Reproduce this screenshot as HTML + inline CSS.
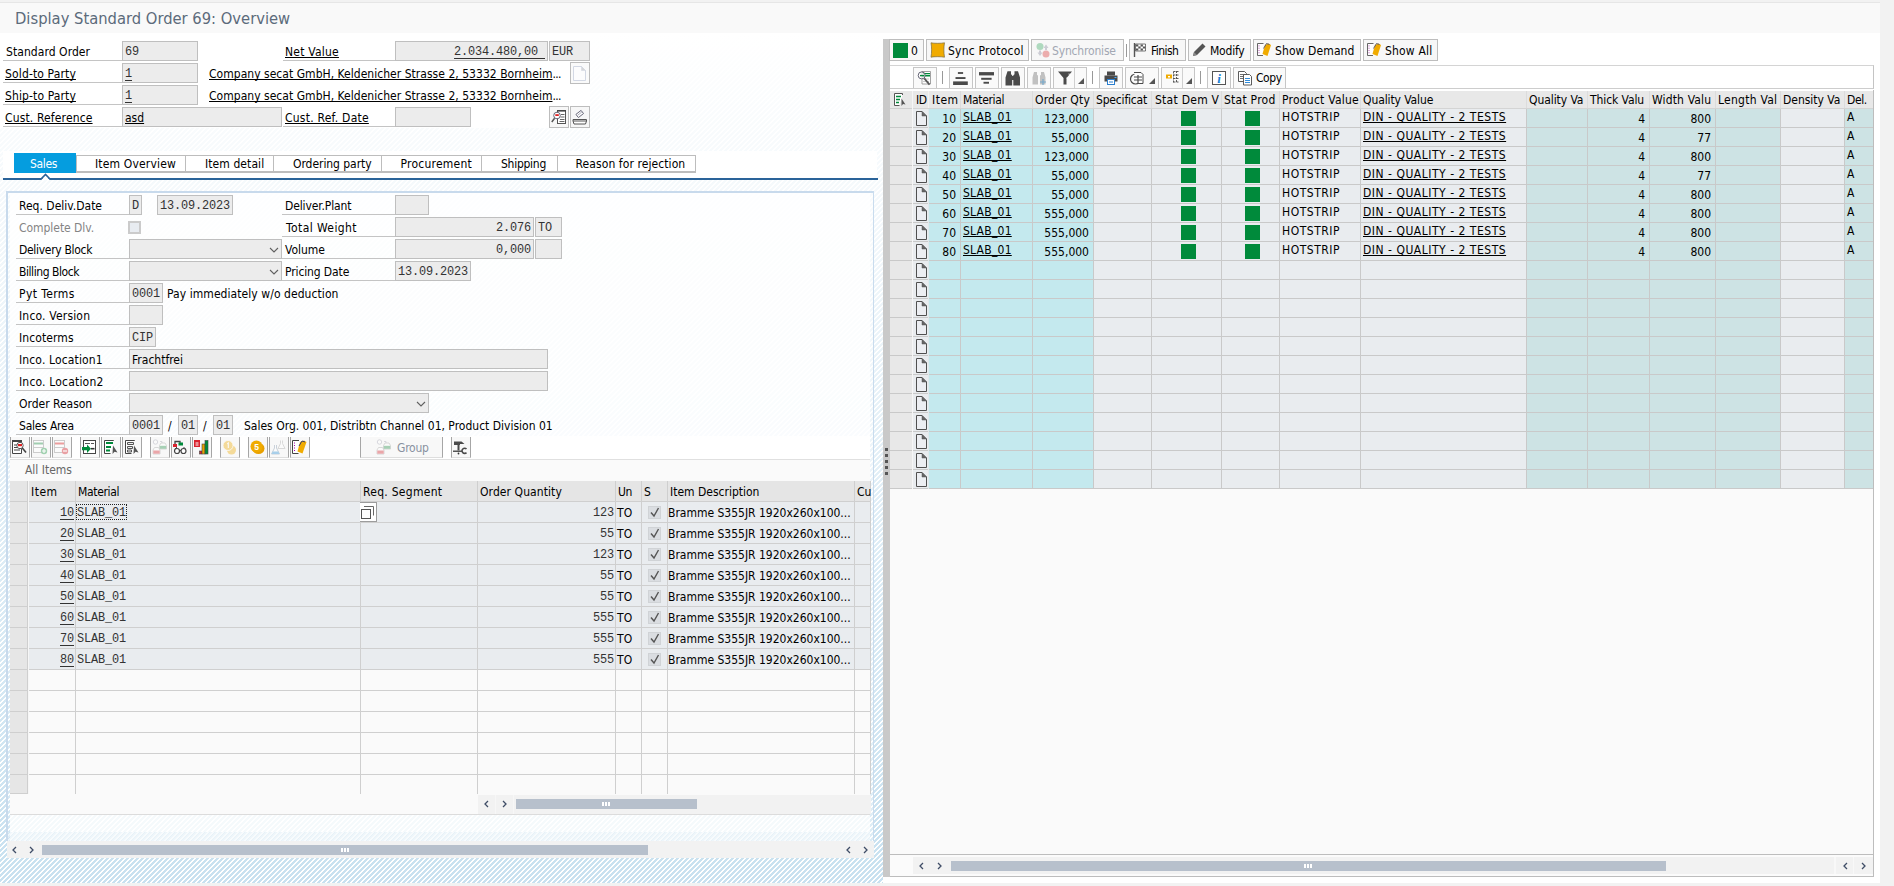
<!DOCTYPE html>
<html><head><meta charset='utf-8'><title>Display Standard Order 69: Overview</title>
<style>
html,body{margin:0;padding:0}
body{width:1894px;height:886px;overflow:hidden;background:#f2f2f2;position:relative;font-family:"DejaVu Sans Condensed","Liberation Sans",sans-serif;font-size:12px;line-height:14px;color:#000}
div,span,svg{position:absolute;box-sizing:border-box}
.t{white-space:nowrap;height:14px}
.m{font-family:"Liberation Mono",monospace;font-size:11.9px;letter-spacing:-0.14px;color:#333}
.u{text-decoration:underline;text-underline-offset:1px;text-decoration-thickness:1px;text-decoration-skip-ink:none}
.m.u{text-underline-offset:3px}
.up{letter-spacing:.5px}
.nu{text-decoration:none;display:inline-block;position:static;letter-spacing:-.7px}
.f{background:#ececec;border:1px solid #bfbfbf}
.g{color:#848484}
.r{text-align:right}
.hatch{background:repeating-linear-gradient(135deg,#ffffff 0,#ffffff 1.05px,#c8e1f0 1.05px,#c8e1f0 3.5355px)}
.btn{background:#f7f7f7;border:1px solid #bdbdbd}
.ln{background:#c4c4c4}
</style></head>
<body>
<div style='left:0px;top:2px;width:1880px;height:1px;background:#e6e6e6;'></div>
<div style='left:0px;top:3px;width:1880px;height:30px;background:#f9f9f9;'></div>
<span class='t' style='left:15px;top:8.5px;font-size:16.4px;line-height:20px;height:20px;color:#5c6b7b'>Display Standard Order 69: Overview</span>
<div style='left:0px;top:33px;width:1880px;height:850px;background:#ffffff;'></div>
<div class='hatch' style='left:0px;top:33px;width:883px;height:850px;'></div>
<div style='left:0px;top:33px;width:883px;height:850px;background:linear-gradient(to bottom,rgba(255,255,255,1),rgba(255,255,255,0))'></div>
<div style='left:0px;top:33px;width:590px;height:95px;background:#ffffff;'></div>
<div style='left:3px;top:151px;width:874px;height:28px;background:#ffffff;'></div>
<span class='t ' style='left:6px;top:45px;letter-spacing:0.063px;'>Standard Order</span>
<div class='ln' style='left:3px;top:60px;width:119px;height:1px;'></div>
<span class='t u ' style='left:5px;top:67px;letter-spacing:0.141px;'>Sold-to Party</span>
<div class='ln' style='left:3px;top:82px;width:119px;height:1px;'></div>
<span class='t u ' style='left:5px;top:89px;letter-spacing:0.121px;'>Ship-to Party</span>
<div class='ln' style='left:3px;top:104px;width:119px;height:1px;'></div>
<span class='t u ' style='left:5px;top:111px;letter-spacing:0.144px;'>Cust. Reference</span>
<div class='ln' style='left:3px;top:126px;width:119px;height:1px;'></div>
<div class='f' style='left:122px;top:41px;width:76px;height:20px;'></div>
<span class='t m ' style='left:125px;top:45px;'>69</span>
<div class='f' style='left:122px;top:63px;width:76px;height:20px;'></div>
<span class='t m u' style='left:125px;top:67px;'>1</span>
<div class='f' style='left:122px;top:85px;width:76px;height:20px;'></div>
<span class='t m u' style='left:125px;top:89px;'>1</span>
<div class='f' style='left:122px;top:107px;width:160px;height:20px;'></div>
<span class='t u' style='left:125px;top:111px;'>asd</span>
<span class='t u ' style='left:285px;top:45px;letter-spacing:0.221px;'>Net Value</span>
<div class='ln' style='left:283px;top:60px;width:112px;height:1px;'></div>
<div class='f' style='left:395px;top:41px;width:153px;height:20px;'></div>
<span class='t m u r' style='left:395px;top:45px;width:150px;'>2.034.480,00 </span>
<div class='f' style='left:549px;top:41px;width:41px;height:20px;'></div>
<span class='t m ' style='left:552px;top:45px;'>EUR</span>
<span class='t u' style='left:209px;top:67px;letter-spacing:.03px'>Company secat GmbH, Keldenicher Strasse 2, 53332 Bornheim<span class='nu'>...</span></span>
<span class='t u' style='left:209px;top:89px;letter-spacing:.03px'>Company secat GmbH, Keldenicher Strasse 2, 53332 Bornheim<span class='nu'>...</span></span>
<span class='t u ' style='left:285px;top:111px;letter-spacing:0.237px;'>Cust. Ref. Date</span>
<div class='ln' style='left:283px;top:126px;width:112px;height:1px;'></div>
<div class='f' style='left:395px;top:107px;width:76px;height:20px;'></div>
<div class='btn' style='left:570px;top:62px;width:20px;height:22px;background:#fafafa'></div>
<svg style='left:572px;top:64px' width='16' height='18' viewBox='0 0 16 18'><path d='M1.500 2.500h8l4 4v10h-12z' fill='#fcfcfd' stroke='#d3d8e4'/><path d='M9.500 2.500v4h4z' fill='#d6d6d6' stroke='#d3d8e4' stroke-width='.6'/></svg>
<div class='btn' style='left:549px;top:106px;width:20px;height:22px;'></div>
<svg style='left:551px;top:109px' width='16' height='16' viewBox='0 0 16 16'><rect x='6.500' y='1.500' width='8' height='13' fill='#fff' stroke='#555'/><path d='M6 1.800h9' stroke='#444' stroke-width='1.600'/><path d='M10 5.500h3.500M9.500 8h4M9 10.500h4.500M8.500 12.500h5' stroke='#666' stroke-width='1'/><circle cx='6' cy='6.500' r='3.300' fill='#fff' stroke='#667'/><rect x='4.300' y='5.200' width='3.500' height='1.800' fill='#e02020'/><path d='M3.600 9.300 .8 13' stroke='#555' stroke-width='1.500'/></svg>
<div class='btn' style='left:570px;top:106px;width:20px;height:22px;'></div>
<svg style='left:572px;top:109px' width='16' height='16' viewBox='0 0 16 16'><rect x='4.500' y='3' width='6.500' height='4' transform='rotate(-38 7.700 5)' fill='#fff' stroke='#667' stroke-width='.9'/><path d='M5.800 6.200l4-3.200' stroke='#889' stroke-width='.7'/><path d='M1 10.500h13.500v1.500l-1 3h-11.500l-1-3z' fill='#fff' stroke='#555'/><path d='M1 12h13.500' stroke='#555'/></svg>
<div style='left:76px;top:155px;width:110px;height:17px;background:#ffffff;border:1px solid #bdbdbd;border-bottom:2px solid #bdbdbd;height:18px'></div>
<span class='t ' style='left:95px;top:157px;letter-spacing:0.164px;'>Item Overview</span>
<div style='left:185px;top:155px;width:89px;height:17px;background:#ffffff;border:1px solid #bdbdbd;border-bottom:2px solid #bdbdbd;height:18px'></div>
<span class='t ' style='left:205px;top:157px;letter-spacing:0.085px;'>Item detail</span>
<div style='left:273px;top:155px;width:109px;height:17px;background:#ffffff;border:1px solid #bdbdbd;border-bottom:2px solid #bdbdbd;height:18px'></div>
<span class='t ' style='left:293px;top:157px;letter-spacing:-0.054px;'>Ordering party</span>
<div style='left:381px;top:155px;width:101px;height:17px;background:#ffffff;border:1px solid #bdbdbd;border-bottom:2px solid #bdbdbd;height:18px'></div>
<span class='t ' style='left:400.5px;top:157px;letter-spacing:0.239px;'>Procurement</span>
<div style='left:481px;top:155px;width:77px;height:17px;background:#ffffff;border:1px solid #bdbdbd;border-bottom:2px solid #bdbdbd;height:18px'></div>
<span class='t ' style='left:501px;top:157px;letter-spacing:-0.258px;'>Shipping</span>
<div style='left:557px;top:155px;width:139px;height:17px;background:#ffffff;border:1px solid #bdbdbd;border-bottom:2px solid #bdbdbd;height:18px'></div>
<span class='t ' style='left:575.5px;top:157px;letter-spacing:0.086px;'>Reason for rejection</span>
<div style='left:14px;top:153px;width:62px;height:20px;background:#059ddf;'></div>
<span class='t ' style='left:30px;top:157px;letter-spacing:-0.335px;color:#fff'>Sales</span>
<div style='left:3px;top:178px;width:875px;height:2px;background:#2a6399;'></div>
<svg style='left:38px;top:173px' width='16' height='7' viewBox='0 0 16 7'><path d='M3.200 7l4.300-4.300 4.300 4.300z' fill='#fff'/><path d='M3 6l4.500-4.500 4.500 4.500' fill='none' stroke='#2a6399' stroke-width='1.600'/></svg>
<div style='left:6px;top:191px;width:2px;height:650px;background:#c8daec;'></div>
<div style='left:8px;top:191px;width:862px;height:2px;background:#c8daec;'></div>
<div style='left:10px;top:193px;width:860px;height:648px;background:rgba(255,255,255,.8);'></div>
<div style='left:8px;top:193px;width:2px;height:648px;background:rgba(255,255,255,.15);'></div>
<div style='left:870px;top:191px;width:3px;height:2px;background:#c9dcee;'></div>
<div style='left:870px;top:193px;width:3px;height:648px;background:rgba(255,255,255,.35);'></div>
<span class='t ' style='left:19px;top:199px;letter-spacing:0.003px;'>Req. Deliv.Date</span>
<div class='ln' style='left:16px;top:214px;width:113px;height:1px;'></div>
<div class='f' style='left:129px;top:195px;width:13px;height:20px;'></div>
<span class='t m ' style='left:132px;top:199px;'>D</span>
<div class='f' style='left:157px;top:195px;width:76px;height:20px;'></div>
<span class='t m ' style='left:160px;top:199px;'>13.09.2023</span>
<span class='t ' style='left:285px;top:199px;letter-spacing:-0.121px;'>Deliver.Plant</span>
<div class='ln' style='left:282px;top:214px;width:113px;height:1px;'></div>
<div class='f' style='left:395px;top:195px;width:34px;height:20px;'></div>
<span class='t g' style='left:19px;top:221px;letter-spacing:-0.047px;'>Complete Dlv.</span>
<div style='left:128px;top:221px;width:13px;height:13px;background:#e8ecf1;border:2px solid #cbcbcb'></div>
<span class='t ' style='left:286px;top:221px;letter-spacing:0.42px;'>Total Weight</span>
<div class='ln' style='left:282px;top:236px;width:113px;height:1px;'></div>
<div class='f' style='left:395px;top:217px;width:139px;height:20px;'></div>
<span class='t m r' style='left:395px;top:221px;width:136px;'>2.076</span>
<div class='f' style='left:535px;top:217px;width:27px;height:20px;'></div>
<span class='t m ' style='left:538px;top:221px;'>TO</span>
<span class='t ' style='left:19px;top:243px;letter-spacing:-0.303px;'>Delivery Block</span>
<div class='ln' style='left:16px;top:258px;width:113px;height:1px;'></div>
<div class='f' style='left:129px;top:239px;width:153px;height:20px;'></div>
<svg style='left:268.5px;top:246.5px' width='10' height='7' viewBox='0 0 10 7'><path d='M1 1l4 4 4-4' fill='none' stroke='#606060' stroke-width='1.1'/></svg>
<span class='t ' style='left:285px;top:243px;letter-spacing:-0.032px;'>Volume</span>
<div class='ln' style='left:282px;top:258px;width:113px;height:1px;'></div>
<div class='f' style='left:395px;top:239px;width:139px;height:20px;'></div>
<span class='t m r' style='left:395px;top:243px;width:136px;'>0,000</span>
<div class='f' style='left:535px;top:239px;width:27px;height:20px;'></div>
<span class='t ' style='left:19px;top:265px;letter-spacing:-0.436px;'>Billing Block</span>
<div class='ln' style='left:16px;top:280px;width:113px;height:1px;'></div>
<div class='f' style='left:129px;top:261px;width:153px;height:20px;'></div>
<svg style='left:268.5px;top:268.5px' width='10' height='7' viewBox='0 0 10 7'><path d='M1 1l4 4 4-4' fill='none' stroke='#606060' stroke-width='1.1'/></svg>
<span class='t ' style='left:285px;top:265px;letter-spacing:-0.118px;'>Pricing Date</span>
<div class='ln' style='left:282px;top:280px;width:113px;height:1px;'></div>
<div class='f' style='left:395px;top:261px;width:76px;height:20px;'></div>
<span class='t m ' style='left:398px;top:265px;'>13.09.2023</span>
<span class='t ' style='left:19px;top:287px;letter-spacing:0.41px;'>Pyt Terms</span>
<div class='ln' style='left:16px;top:302px;width:113px;height:1px;'></div>
<div class='f' style='left:129px;top:283px;width:34px;height:20px;'></div>
<span class='t m ' style='left:132px;top:287px;'>0001</span>
<span class='t ' style='left:167px;top:287px;letter-spacing:0.066px;'>Pay immediately w/o deduction</span>
<span class='t ' style='left:19px;top:309px;letter-spacing:0.182px;'>Inco. Version</span>
<div class='ln' style='left:16px;top:324px;width:113px;height:1px;'></div>
<div class='f' style='left:129px;top:305px;width:34px;height:20px;'></div>
<span class='t ' style='left:19px;top:331px;letter-spacing:0.087px;'>Incoterms</span>
<div class='ln' style='left:16px;top:346px;width:113px;height:1px;'></div>
<div class='f' style='left:129px;top:327px;width:27px;height:20px;'></div>
<span class='t m ' style='left:132px;top:331px;'>CIP</span>
<span class='t ' style='left:19px;top:353px;letter-spacing:0.135px;'>Inco. Location1</span>
<div class='ln' style='left:16px;top:368px;width:113px;height:1px;'></div>
<div class='f' style='left:129px;top:349px;width:419px;height:20px;'></div>
<span class='t ' style='left:132px;top:353px;'>Frachtfrei</span>
<span class='t ' style='left:19px;top:375px;letter-spacing:0.185px;'>Inco. Location2</span>
<div class='ln' style='left:16px;top:390px;width:113px;height:1px;'></div>
<div class='f' style='left:129px;top:371px;width:419px;height:20px;'></div>
<span class='t ' style='left:19px;top:397px;letter-spacing:-0.016px;'>Order Reason</span>
<div class='ln' style='left:16px;top:412px;width:113px;height:1px;'></div>
<div class='f' style='left:129px;top:393px;width:300px;height:20px;'></div>
<svg style='left:415.5px;top:400.5px' width='10' height='7' viewBox='0 0 10 7'><path d='M1 1l4 4 4-4' fill='none' stroke='#606060' stroke-width='1.1'/></svg>
<span class='t ' style='left:19px;top:419px;letter-spacing:-0.209px;'>Sales Area</span>
<div class='ln' style='left:16px;top:434px;width:113px;height:1px;'></div>
<div class='f' style='left:129px;top:415px;width:34px;height:20px;'></div>
<span class='t m ' style='left:132px;top:419px;'>0001</span>
<span class='t ' style='left:168px;top:419px;'>/</span>
<div class='f' style='left:178px;top:415px;width:20px;height:20px;'></div>
<span class='t m ' style='left:181px;top:419px;'>01</span>
<span class='t ' style='left:203px;top:419px;'>/</span>
<div class='f' style='left:213px;top:415px;width:20px;height:20px;'></div>
<span class='t m ' style='left:216px;top:419px;'>01</span>
<span class='t ' style='left:244px;top:419px;'>Sales Org. 001, Distribtn Channel 01, Product Division 01</span>
<div style='left:10px;top:436px;width:860px;height:23px;background:#ffffff;'></div>
<div style='left:10px;top:459px;width:860px;height:1px;background:#e0e0e0;'></div>
<div style='left:10px;top:460px;width:860px;height:354px;background:#fafafa;'></div>
<div style='left:10px;top:814px;width:860px;height:1px;background:#dcdcdc;'></div>
<div class='hatch' style='left:8px;top:832px;width:862px;height:9px;opacity:.3'></div>
<div style='left:873px;top:191px;width:1px;height:650px;background:#c9dcee;'></div>
<div style='left:10px;top:437px;width:20px;height:21px;background:#f8f8f8;border-left:1px solid #a6a6a6;border-right:1px solid #a6a6a6;border-bottom:1px solid #dedede'></div>
<svg style='left:11px;top:439px' width='16' height='16' viewBox='0 0 16 16'><path d='M1.5 1.5h9v13h-9z' fill='#fff' stroke='#444'/><path d='M1 2h10' stroke='#444' stroke-width='2'/><path d='M3 6h4M3 8.5h5M3 11h6' stroke='#444' stroke-width='1.2'/><circle cx='9' cy='6.5' r='3.2' fill='#fff' stroke='#555'/><rect x='7' y='5' width='4' height='2.2' fill='#e02020'/><path d='M11.3 9l3.7 4.5' stroke='#444' stroke-width='1.6'/></svg>
<div style='left:31px;top:437px;width:20px;height:21px;background:#f8f8f8;border-left:1px solid #a6a6a6;border-right:1px solid #a6a6a6;border-bottom:1px solid #dedede'></div>
<svg style='left:32px;top:439px' width='16' height='16' viewBox='0 0 16 16'><g opacity='.45'><rect x='1.5' y='1.5' width='10' height='12' fill='#fff' stroke='#999'/><path d='M2 4.5h9' stroke='#3a9a5a' stroke-width='2'/><path d='M2 8.5h9' stroke='#999'/><circle cx='12' cy='12' r='3.2' fill='#3aa35a'/><path d='M10 12h4M12 10v4' stroke='#fff' stroke-width='1.2'/></g></svg>
<div style='left:52px;top:437px;width:20px;height:21px;background:#f8f8f8;border-left:1px solid #a6a6a6;border-right:1px solid #a6a6a6;border-bottom:1px solid #dedede'></div>
<svg style='left:53px;top:439px' width='16' height='16' viewBox='0 0 16 16'><g opacity='.45'><rect x='1.5' y='1.5' width='10' height='12' fill='#fff' stroke='#999'/><path d='M2 4.5h9' stroke='#d33' stroke-width='2'/><path d='M2 8.5h9' stroke='#999'/><circle cx='12' cy='12' r='3.2' fill='#d9363e'/><path d='M10 12h4' stroke='#fff' stroke-width='1.2'/></g></svg>
<div style='left:80px;top:437px;width:20px;height:21px;background:#f8f8f8;border-left:1px solid #a6a6a6;border-right:1px solid #a6a6a6;border-bottom:1px solid #dedede'></div>
<svg style='left:81px;top:439px' width='16' height='16' viewBox='0 0 16 16'><rect x='2.5' y='1.5' width='12' height='13' fill='#fff' stroke='#444'/><path d='M4 4.500h5M10 4.500h3' stroke='#555' stroke-width='1'/><path d='M1 8h5v-2.500l4 4.200-4 4.200v-2.600h-5z' fill='#008a3b'/><path d='M10 9.700h3.500' stroke='#333' stroke-width='1.600'/></svg>
<div style='left:101px;top:437px;width:20px;height:21px;background:#f8f8f8;border-left:1px solid #a6a6a6;border-right:1px solid #a6a6a6;border-bottom:1px solid #dedede'></div>
<svg style='left:102px;top:439px' width='16' height='16' viewBox='0 0 16 16'><path d='M11.5 2v-0.5h-9v13h6' fill='#fff' stroke='#444'/><path d='M4 4h7M4 8h5M4 11.5h4' stroke='#008a3b' stroke-width='2'/><path d='M11 6.5l4.5 7-3-.8-2 2.3z' fill='#555'/></svg>
<div style='left:122px;top:437px;width:20px;height:21px;background:#f8f8f8;border-left:1px solid #a6a6a6;border-right:1px solid #a6a6a6;border-bottom:1px solid #dedede'></div>
<svg style='left:123px;top:439px' width='16' height='16' viewBox='0 0 16 16'><path d='M11.5 2v-0.5h-9v13h6' fill='#fff' stroke='#444'/><path d='M4.5 3.5h6v2h-6zM4.5 7.5h5v2h-5zM4.5 11h4v2h-4z' fill='#eee' stroke='#555'/><path d='M11 6.5l4.5 7-3-.8-2 2.3z' fill='#555'/></svg>
<div style='left:150px;top:437px;width:20px;height:21px;background:#f8f8f8;border-left:1px solid #a6a6a6;border-right:1px solid #a6a6a6;border-bottom:1px solid #dedede'></div>
<svg style='left:151px;top:439px' width='16' height='16' viewBox='0 0 16 16'><g opacity='.42'><circle cx='4.500' cy='3' r='2.200' fill='#fff' stroke='#99a' stroke-width='.8'/><path d='M9 2.500h2v1.500' fill='none' stroke='#99a' stroke-width='.8'/><path d='M3.500 8.500h4l1.500 2.500v4h-7v-4z' fill='#fff' stroke='#999' stroke-width='.8'/><rect x='2.300' y='11.500' width='6.400' height='3.200' fill='#d9363e'/><path d='M10 4h4l1.500 2.500v3.500h-7v-3.500z' fill='#fff' stroke='#999' stroke-width='.8'/><rect x='8.800' y='6.800' width='6.400' height='3' fill='#3a9a5a'/></g></svg>
<div style='left:171px;top:437px;width:20px;height:21px;background:#f8f8f8;border-left:1px solid #a6a6a6;border-right:1px solid #a6a6a6;border-bottom:1px solid #dedede'></div>
<svg style='left:172px;top:439px' width='16' height='16' viewBox='0 0 16 16'><path d='M3 5.5v-3h5v2' fill='none' stroke='#444' stroke-width='1.3'/><rect x='1' y='5' width='4' height='3' fill='#d9232e'/><rect x='6.5' y='3.5' width='4.5' height='3' fill='#008a3b'/><circle cx='5' cy='12' r='2.5' fill='#fff' stroke='#444' stroke-width='1.2'/><circle cx='11.5' cy='12' r='2.5' fill='#fff' stroke='#444' stroke-width='1.2'/><path d='M7.5 11.5h1.5M3 10l2-2M13.5 10l-2-2' stroke='#444' fill='none'/></svg>
<div style='left:192px;top:437px;width:20px;height:21px;background:#f8f8f8;border-left:1px solid #a6a6a6;border-right:1px solid #a6a6a6;border-bottom:1px solid #dedede'></div>
<svg style='left:193px;top:439px' width='16' height='16' viewBox='0 0 16 16'><rect x='1' y='1' width='6' height='7' fill='#d9232e'/><path d='M2.5 4h3M2.5 6h3' stroke='#fff' stroke-width='1'/><rect x='6.5' y='12' width='2.5' height='3' fill='#d9232e' stroke='#444' stroke-width='.6'/><rect x='9' y='5' width='3' height='10' fill='#e8a200' stroke='#444' stroke-width='.6'/><rect x='12' y='1.5' width='3' height='13.5' fill='#008a3b' stroke='#444' stroke-width='.6'/></svg>
<div style='left:220px;top:437px;width:20px;height:21px;background:#f8f8f8;border-left:1px solid #a6a6a6;border-right:1px solid #a6a6a6;border-bottom:1px solid #dedede'></div>
<svg style='left:221px;top:439px' width='16' height='16' viewBox='0 0 16 16'><g opacity='.38'><circle cx='10.5' cy='11' r='4.5' fill='#f0ab00'/><circle cx='7' cy='6.5' r='5' fill='#f0ab00' stroke='#fff' stroke-width='.8'/><path d='M6.3 5l1-1v5' stroke='#fff' stroke-width='1.1' fill='none'/></g></svg>
<div style='left:248px;top:437px;width:20px;height:21px;background:#f8f8f8;border-left:1px solid #a6a6a6;border-right:1px solid #a6a6a6;border-bottom:1px solid #dedede'></div>
<svg style='left:249px;top:439px' width='16' height='16' viewBox='0 0 16 16'><ellipse cx='9.5' cy='9.5' rx='6' ry='5.5' fill='#e8a000'/><circle cx='7.5' cy='7.5' r='6' fill='#f0ab00'/><text x='7.5' y='10.6' text-anchor='middle' font-size='8.5' font-weight='bold' fill='#fff' font-family='Liberation Sans,sans-serif'>5</text></svg>
<div style='left:269px;top:437px;width:20px;height:21px;background:#f8f8f8;border-left:1px solid #a6a6a6;border-right:1px solid #a6a6a6;border-bottom:1px solid #dedede'></div>
<svg style='left:270px;top:439px' width='16' height='16' viewBox='0 0 16 16'><g opacity='.5'><path d='M4.5 6v3l-3 6h8l-3-6v-3' fill='#fff' stroke='#9ab'/><path d='M2.6 12.5h5.8l1.1 2.5h-8z' fill='#5aa8dd'/><path d='M10.5 1.5v3l-2.5 5h7l-2.5-5v-3' fill='#fff' stroke='#bbb'/></g></svg>
<div style='left:290px;top:437px;width:20px;height:21px;background:#f8f8f8;border-left:1px solid #a6a6a6;border-right:1px solid #a6a6a6;border-bottom:1px solid #dedede'></div>
<svg style='left:291px;top:439px' width='16' height='16' viewBox='0 0 16 16'><path d='M8 1.5h-6.5v13h6' fill='#fff' stroke='#444'/><path d='M3.5 3.5v1M3.5 6v1M3.5 8.5v1M3.5 11v1' stroke='#a0a'/><path d='M9 3l4-1.5 2.5 1.5-4 11.5-5-2z' fill='#f0ab00'/><path d='M8 7l3-5 3 1' fill='none' stroke='#446'/></svg>
<div style='left:451px;top:437px;width:20px;height:21px;background:#f8f8f8;border-left:1px solid #a6a6a6;border-right:1px solid #a6a6a6;border-bottom:1px solid #dedede'></div>
<svg style='left:452px;top:439px' width='16' height='16' viewBox='0 0 16 16'><path d='M2 2.500h7.500l3 2.500h-4.500v1h-6z' fill='#4a4a4a'/><path d='M5.500 5.500h2v6h-2z' fill='#4a4a4a'/><path d='M1 11.500h9v1.500h-9z' fill='#555'/><circle cx='6.500' cy='14.500' r='.9' fill='#333'/><path d='M14.500 10a2.600 2.600 0 1 0 0 3.600' fill='none' stroke='#4a4a4a' stroke-width='1.600'/></svg>
<div style='left:360px;top:437px;width:83px;height:21px;background:#f8f8f8;border-left:1px solid #a6a6a6;border-right:1px solid #a6a6a6;border-bottom:1px solid #dedede'></div>
<svg style='left:375px;top:439px' width='16' height='16' viewBox='0 0 16 16'><g opacity='.42'><circle cx='4.500' cy='3' r='2.200' fill='#fff' stroke='#99a' stroke-width='.8'/><path d='M9 2.500h2v1.500' fill='none' stroke='#99a' stroke-width='.8'/><path d='M3.500 8.500h4l1.500 2.500v4h-7v-4z' fill='#fff' stroke='#999' stroke-width='.8'/><rect x='2.300' y='11.500' width='6.400' height='3.200' fill='#d9363e'/><path d='M10 4h4l1.500 2.500v3.500h-7v-3.500z' fill='#fff' stroke='#999' stroke-width='.8'/><rect x='8.800' y='6.800' width='6.400' height='3' fill='#3a9a5a'/></g></svg>
<span class='t ' style='left:397px;top:441px;letter-spacing:-0.236px;color:#8891a0'>Group</span>
<span class='t ' style='left:25px;top:463px;letter-spacing:-0.014px;color:#666'>All Items</span>
<div style='left:10px;top:481px;width:861px;height:21px;background:#e5e5e5;'></div>
<div style='left:29px;top:502px;width:842px;height:168px;background:#e9ecef;'></div>
<div style='left:10px;top:502px;width:18px;height:292px;background:#e6e6e6;'></div>
<div style='left:10px;top:501px;width:861px;height:1px;background:#cfcfcf;'></div>
<div style='left:10px;top:522px;width:861px;height:1px;background:#cfcfcf;'></div>
<div style='left:10px;top:543px;width:861px;height:1px;background:#cfcfcf;'></div>
<div style='left:10px;top:564px;width:861px;height:1px;background:#cfcfcf;'></div>
<div style='left:10px;top:585px;width:861px;height:1px;background:#cfcfcf;'></div>
<div style='left:10px;top:606px;width:861px;height:1px;background:#cfcfcf;'></div>
<div style='left:10px;top:627px;width:861px;height:1px;background:#cfcfcf;'></div>
<div style='left:10px;top:648px;width:861px;height:1px;background:#cfcfcf;'></div>
<div style='left:10px;top:669px;width:861px;height:1px;background:#cfcfcf;'></div>
<div style='left:10px;top:690px;width:861px;height:1px;background:#cfcfcf;'></div>
<div style='left:10px;top:711px;width:861px;height:1px;background:#cfcfcf;'></div>
<div style='left:10px;top:732px;width:861px;height:1px;background:#cfcfcf;'></div>
<div style='left:10px;top:753px;width:861px;height:1px;background:#cfcfcf;'></div>
<div style='left:10px;top:774px;width:861px;height:1px;background:#cfcfcf;'></div>
<div style='left:10px;top:793px;width:18px;height:1px;background:#cfcfcf;'></div>
<div style='left:28px;top:481px;width:1px;height:313px;background:#f6f6f6;'></div>
<div style='left:27px;top:481px;width:1px;height:313px;background:#cfcfcf;'></div>
<div style='left:75px;top:481px;width:1px;height:313px;background:#cfcfcf;'></div>
<span class='t ' style='left:31px;top:485px;letter-spacing:0.509px;'>Item</span>
<div style='left:360px;top:481px;width:1px;height:313px;background:#cfcfcf;'></div>
<span class='t ' style='left:78px;top:485px;letter-spacing:-0.337px;'>Material</span>
<div style='left:477px;top:481px;width:1px;height:313px;background:#cfcfcf;'></div>
<span class='t ' style='left:363px;top:485px;letter-spacing:0.281px;'>Req. Segment</span>
<div style='left:615px;top:481px;width:1px;height:313px;background:#cfcfcf;'></div>
<span class='t ' style='left:480px;top:485px;letter-spacing:0.082px;'>Order Quantity</span>
<div style='left:641px;top:481px;width:1px;height:313px;background:#cfcfcf;'></div>
<span class='t ' style='left:618px;top:485px;letter-spacing:-0.348px;'>Un</span>
<div style='left:667px;top:481px;width:1px;height:313px;background:#cfcfcf;'></div>
<span class='t ' style='left:644px;top:485px;'>S</span>
<div style='left:854px;top:481px;width:1px;height:313px;background:#cfcfcf;'></div>
<span class='t ' style='left:670px;top:485px;letter-spacing:-0.006px;'>Item Description</span>
<div style='left:870px;top:481px;width:1px;height:313px;background:#cfcfcf;'></div>
<span class='t ' style='left:857px;top:485px;'>Cu</span>
<span class='t m u r' style='left:29px;top:506px;width:45px;'>10</span>
<span class='t m ' style='left:77px;top:506px;'>SLAB_01</span>
<span class='t m r' style='left:478px;top:506px;width:136px;'>123</span>
<span class='t ' style='left:617px;top:506px;letter-spacing:0.112px;'>TO</span>
<div style='left:648px;top:506px;width:13px;height:13px;background:#dadde1;border:1px solid #d0d3d6'></div>
<svg style='left:649px;top:507px' width='11' height='11' viewBox='0 0 11 11'><path d='M2 5.5l3 3.5 4.5-8' fill='none' stroke='#555' stroke-width='1.4'/></svg>
<span class='t ' style='left:668px;top:506px;letter-spacing:-0.009px;'>Bramme S355JR 1920x260x100...</span>
<span class='t m u r' style='left:29px;top:527px;width:45px;'>20</span>
<span class='t m ' style='left:77px;top:527px;'>SLAB_01</span>
<span class='t m r' style='left:478px;top:527px;width:136px;'>55</span>
<span class='t ' style='left:617px;top:527px;letter-spacing:0.112px;'>TO</span>
<div style='left:648px;top:527px;width:13px;height:13px;background:#dadde1;border:1px solid #d0d3d6'></div>
<svg style='left:649px;top:528px' width='11' height='11' viewBox='0 0 11 11'><path d='M2 5.5l3 3.5 4.5-8' fill='none' stroke='#555' stroke-width='1.4'/></svg>
<span class='t ' style='left:668px;top:527px;letter-spacing:-0.009px;'>Bramme S355JR 1920x260x100...</span>
<span class='t m u r' style='left:29px;top:548px;width:45px;'>30</span>
<span class='t m ' style='left:77px;top:548px;'>SLAB_01</span>
<span class='t m r' style='left:478px;top:548px;width:136px;'>123</span>
<span class='t ' style='left:617px;top:548px;letter-spacing:0.112px;'>TO</span>
<div style='left:648px;top:548px;width:13px;height:13px;background:#dadde1;border:1px solid #d0d3d6'></div>
<svg style='left:649px;top:549px' width='11' height='11' viewBox='0 0 11 11'><path d='M2 5.5l3 3.5 4.5-8' fill='none' stroke='#555' stroke-width='1.4'/></svg>
<span class='t ' style='left:668px;top:548px;letter-spacing:-0.009px;'>Bramme S355JR 1920x260x100...</span>
<span class='t m u r' style='left:29px;top:569px;width:45px;'>40</span>
<span class='t m ' style='left:77px;top:569px;'>SLAB_01</span>
<span class='t m r' style='left:478px;top:569px;width:136px;'>55</span>
<span class='t ' style='left:617px;top:569px;letter-spacing:0.112px;'>TO</span>
<div style='left:648px;top:569px;width:13px;height:13px;background:#dadde1;border:1px solid #d0d3d6'></div>
<svg style='left:649px;top:570px' width='11' height='11' viewBox='0 0 11 11'><path d='M2 5.5l3 3.5 4.5-8' fill='none' stroke='#555' stroke-width='1.4'/></svg>
<span class='t ' style='left:668px;top:569px;letter-spacing:-0.009px;'>Bramme S355JR 1920x260x100...</span>
<span class='t m u r' style='left:29px;top:590px;width:45px;'>50</span>
<span class='t m ' style='left:77px;top:590px;'>SLAB_01</span>
<span class='t m r' style='left:478px;top:590px;width:136px;'>55</span>
<span class='t ' style='left:617px;top:590px;letter-spacing:0.112px;'>TO</span>
<div style='left:648px;top:590px;width:13px;height:13px;background:#dadde1;border:1px solid #d0d3d6'></div>
<svg style='left:649px;top:591px' width='11' height='11' viewBox='0 0 11 11'><path d='M2 5.5l3 3.5 4.5-8' fill='none' stroke='#555' stroke-width='1.4'/></svg>
<span class='t ' style='left:668px;top:590px;letter-spacing:-0.009px;'>Bramme S355JR 1920x260x100...</span>
<span class='t m u r' style='left:29px;top:611px;width:45px;'>60</span>
<span class='t m ' style='left:77px;top:611px;'>SLAB_01</span>
<span class='t m r' style='left:478px;top:611px;width:136px;'>555</span>
<span class='t ' style='left:617px;top:611px;letter-spacing:0.112px;'>TO</span>
<div style='left:648px;top:611px;width:13px;height:13px;background:#dadde1;border:1px solid #d0d3d6'></div>
<svg style='left:649px;top:612px' width='11' height='11' viewBox='0 0 11 11'><path d='M2 5.5l3 3.5 4.5-8' fill='none' stroke='#555' stroke-width='1.4'/></svg>
<span class='t ' style='left:668px;top:611px;letter-spacing:-0.009px;'>Bramme S355JR 1920x260x100...</span>
<span class='t m u r' style='left:29px;top:632px;width:45px;'>70</span>
<span class='t m ' style='left:77px;top:632px;'>SLAB_01</span>
<span class='t m r' style='left:478px;top:632px;width:136px;'>555</span>
<span class='t ' style='left:617px;top:632px;letter-spacing:0.112px;'>TO</span>
<div style='left:648px;top:632px;width:13px;height:13px;background:#dadde1;border:1px solid #d0d3d6'></div>
<svg style='left:649px;top:633px' width='11' height='11' viewBox='0 0 11 11'><path d='M2 5.5l3 3.5 4.5-8' fill='none' stroke='#555' stroke-width='1.4'/></svg>
<span class='t ' style='left:668px;top:632px;letter-spacing:-0.009px;'>Bramme S355JR 1920x260x100...</span>
<span class='t m u r' style='left:29px;top:653px;width:45px;'>80</span>
<span class='t m ' style='left:77px;top:653px;'>SLAB_01</span>
<span class='t m r' style='left:478px;top:653px;width:136px;'>555</span>
<span class='t ' style='left:617px;top:653px;letter-spacing:0.112px;'>TO</span>
<div style='left:648px;top:653px;width:13px;height:13px;background:#dadde1;border:1px solid #d0d3d6'></div>
<svg style='left:649px;top:654px' width='11' height='11' viewBox='0 0 11 11'><path d='M2 5.5l3 3.5 4.5-8' fill='none' stroke='#555' stroke-width='1.4'/></svg>
<span class='t ' style='left:668px;top:653px;letter-spacing:-0.009px;'>Bramme S355JR 1920x260x100...</span>
<div style='left:76px;top:504px;width:51px;height:16px;border:1px dotted #222'></div>
<div style='left:360px;top:502px;width:17px;height:20px;background:#ffffff;border:1px solid #9c9c9c;border-left:none'></div>
<svg style='left:360px;top:504px' width='16' height='16' viewBox='0 0 16 16'><rect x='1.5' y='5.5' width='9' height='9' fill='#fff' stroke='#555'/><path d='M4 2.5h9.5v9' fill='none' stroke='#666'/></svg>
<div style='left:478px;top:795px;width:393px;height:19px;background:#f2f2f2;'></div>
<div style='left:495px;top:795px;width:1px;height:19px;background:#f7f7f7;'></div>
<div style='left:513px;top:795px;width:1px;height:19px;background:#f7f7f7;'></div>
<svg style='left:483px;top:799px' width='7' height='10' viewBox='0 0 7 10'><path d='M5 2l-3 3 3 3' fill='none' stroke='#3f4d66' stroke-width='1.3'/></svg>
<svg style='left:501px;top:799px' width='7' height='10' viewBox='0 0 7 10'><path d='M2 2l3 3-3 3' fill='none' stroke='#3f4d66' stroke-width='1.3'/></svg>
<div style='left:516px;top:799px;width:181px;height:10px;background:#b7c0cc;'></div>
<div style='left:602px;top:802px;width:2px;height:4px;background:#fff;'></div>
<div style='left:605px;top:802px;width:2px;height:4px;background:#fff;'></div>
<div style='left:608px;top:802px;width:2px;height:4px;background:#fff;'></div>
<div style='left:7px;top:841px;width:867px;height:17px;background:#f2f2f2;'></div>
<svg style='left:11px;top:845px' width='7' height='10' viewBox='0 0 7 10'><path d='M5 2l-3 3 3 3' fill='none' stroke='#3f4d66' stroke-width='1.3'/></svg>
<svg style='left:28px;top:845px' width='7' height='10' viewBox='0 0 7 10'><path d='M2 2l3 3-3 3' fill='none' stroke='#3f4d66' stroke-width='1.3'/></svg>
<svg style='left:845px;top:845px' width='7' height='10' viewBox='0 0 7 10'><path d='M5 2l-3 3 3 3' fill='none' stroke='#3f4d66' stroke-width='1.3'/></svg>
<svg style='left:862px;top:845px' width='7' height='10' viewBox='0 0 7 10'><path d='M2 2l3 3-3 3' fill='none' stroke='#3f4d66' stroke-width='1.3'/></svg>
<div style='left:42px;top:845px;width:606px;height:10px;background:#b7c0cc;'></div>
<div style='left:341px;top:848px;width:2px;height:4px;background:#fff;'></div>
<div style='left:344px;top:848px;width:2px;height:4px;background:#fff;'></div>
<div style='left:347px;top:848px;width:2px;height:4px;background:#fff;'></div>
<div style='left:883px;top:39px;width:7px;height:838px;background:#c9c9c9;'></div>
<div style='left:885px;top:448px;width:3px;height:3px;background:#555;'></div>
<div style='left:885px;top:454px;width:3px;height:3px;background:#555;'></div>
<div style='left:885px;top:460px;width:3px;height:3px;background:#555;'></div>
<div style='left:885px;top:466px;width:3px;height:3px;background:#555;'></div>
<div style='left:885px;top:472px;width:3px;height:3px;background:#555;'></div>
<div style='left:890px;top:39px;width:984px;height:838px;background:#ffffff;'></div>
<div class='btn' style='left:889px;top:39px;width:35px;height:22px;'></div>
<div style='left:893px;top:43px;width:15px;height:15px;background:#008a3b;'></div>
<span class='t ' style='left:911px;top:44px;'>0</span>
<div class='btn' style='left:926px;top:39px;width:103px;height:22px;'></div>
<svg style='left:930px;top:42px' width='16' height='16' viewBox='0 0 16 16'><path d='M1 .8c3 .7 10 .7 13.500 0-.8 4-.8 10 0 14.400-3.500-.7-10.500-.7-13.500 0 .8-4.400 .8-10.400 0-14.400z' fill='#f0ab00' stroke='#7a6a40' stroke-width='.7'/></svg>
<span class='t ' style='left:948px;top:44px;letter-spacing:0.225px;'>Sync Protocol</span>
<div class='btn' style='left:1031px;top:39px;width:93px;height:22px;'></div>
<svg style='left:1035px;top:42px' width='16' height='16' viewBox='0 0 16 16'><g opacity='.45'><circle cx='5' cy='4.5' r='3.5' fill='#58b57a'/><circle cx='11' cy='12' r='3.5' fill='#e05555'/><path d='M11 2.5l2.5 3.5h-1.5v2h-2v-2h-1.5zM5 14l-2.500-3.500h1.500v-2h2v2h1.500z' fill='#99a'/></g></svg>
<span class='t g' style='left:1052px;top:44px;letter-spacing:-0.175px;color:#a2a7b3;'>Synchronise</span>
<div style='left:1126px;top:44px;width:1px;height:13px;background:#999;'></div>
<div class='btn' style='left:1129px;top:39px;width:57px;height:22px;'></div>
<svg style='left:1132px;top:42px' width='16' height='16' viewBox='0 0 16 16'><path d='M2.500 1v14' stroke='#555' stroke-width='1.400'/><path d='M3.500 2h10v7h-10z' fill='#fff' stroke='#555' stroke-width='.8'/><path d='M4 2.500h2.300v2h-2.300zM8.600 2.500h2.300v2h-2.300zM6.300 4.500h2.300v2h-2.300zM10.900 4.500h2.300v2h-2.300zM4 6.500h2.300v2h-2.300zM8.600 6.500h2.300v2h-2.300z' fill='#555'/></svg>
<span class='t ' style='left:1151px;top:44px;letter-spacing:-0.57px;'>Finish</span>
<div class='btn' style='left:1188px;top:39px;width:63px;height:22px;'></div>
<svg style='left:1191px;top:42px' width='16' height='16' viewBox='0 0 16 16'><path d='M2 14l1-4 8.500-8.500 3 3-8.500 8.500z' fill='#555'/><path d='M2 14l1-4 3 3z' fill='#888'/></svg>
<span class='t ' style='left:1210px;top:44px;letter-spacing:-0.21px;'>Modify</span>
<div class='btn' style='left:1253px;top:39px;width:108px;height:22px;'></div>
<svg style='left:1256px;top:42px' width='16' height='16' viewBox='0 0 16 16'><path d='M7.500 1.500h-6v12h5.500' fill='#fff' stroke='#555' stroke-width='.9'/><path d='M3 3.500v.8M3 5.800v.8M3 8.100v.8M3 10.400v.8' stroke='#a3a'/><path d='M9 3l3.500-1.500 2.500 1.500-3.500 11-5-2z' fill='#f0ab00'/><path d='M7.500 6.500l3-5 3 1' fill='none' stroke='#556' stroke-width='.9'/></svg>
<span class='t ' style='left:1275px;top:44px;letter-spacing:0.105px;'>Show Demand</span>
<div class='btn' style='left:1363px;top:39px;width:75px;height:22px;'></div>
<svg style='left:1366px;top:42px' width='16' height='16' viewBox='0 0 16 16'><path d='M7.500 1.500h-6v12h5.500' fill='#fff' stroke='#555' stroke-width='.9'/><path d='M3 3.500v.8M3 5.800v.8M3 8.100v.8M3 10.400v.8' stroke='#a3a'/><path d='M9 3l3.500-1.500 2.500 1.500-3.500 11-5-2z' fill='#f0ab00'/><path d='M7.500 6.500l3-5 3 1' fill='none' stroke='#556' stroke-width='.9'/></svg>
<span class='t ' style='left:1385px;top:44px;letter-spacing:0.179px;'>Show All</span>
<div style='left:890px;top:65px;width:984px;height:24px;background:#ffffff;border-top:1px solid #d4d4d4;border-bottom:1px solid #cdcdcd;border-right:1px solid #c4c4c4'></div>
<div style='left:913px;top:67px;width:24px;height:21px;background:#fafafa;border:1px solid #c6c6c6;border-bottom:none'></div>
<svg style='left:917px;top:70px' width='16' height='16' viewBox='0 0 16 16'><path d='M5 1.500h8.500v12.500h-8.500z' fill='#fff' stroke='#8a8a8a' stroke-width='.8'/><path d='M6 3.600h7M5 5.700h8' stroke='#008a3b' stroke-width='1.400'/><path d='M6 9h6M6 11.500h6' stroke='#bbb' stroke-width='.8'/><circle cx='4.700' cy='5.400' r='3.500' fill='#fff' fill-opacity='.55' stroke='#667'/><path d='M3 5.600h4' stroke='#008a3b' stroke-width='1.400'/><path d='M7.300 8.400l5.200 6.200' stroke='#555' stroke-width='1.700'/></svg>
<div style='left:942px;top:71px;width:1px;height:13px;background:#999;'></div>
<div style='left:949px;top:67px;width:24px;height:21px;background:#fafafa;border:1px solid #c6c6c6;border-bottom:none'></div>
<svg style='left:953px;top:70px' width='16' height='16' viewBox='0 0 16 16'><rect x='4.900' y='2.100' width='5.200' height='1.800' fill='#4a4a4a'/><rect x='2.500' y='7.100' width='10' height='1.900' fill='#4a4a4a'/><rect x='0.100' y='11.400' width='14.700' height='3.600' fill='#4a4a4a'/></svg>
<div style='left:975px;top:67px;width:24px;height:21px;background:#fafafa;border:1px solid #c6c6c6;border-bottom:none'></div>
<svg style='left:979px;top:70px' width='16' height='16' viewBox='0 0 16 16'><rect x='0' y='2.100' width='15' height='3.300' fill='#4a4a4a'/><rect x='2.200' y='7.800' width='10.400' height='2' fill='#4a4a4a'/><rect x='4.500' y='11.800' width='5.500' height='1.900' fill='#4a4a4a'/></svg>
<div style='left:1001px;top:67px;width:24px;height:21px;background:#fafafa;border:1px solid #c6c6c6;border-bottom:none'></div>
<svg style='left:1005px;top:70px' width='16' height='16' viewBox='0 0 16 16'><path d='M2.500 1.200h3.500v3l1.200 1v10.300h-6.700v-8zM13 1.200h-3.500v3l-1.200 1v10.300h6.700v-8z' fill='#4a4a4a'/><rect x='6.500' y='6' width='2.500' height='4' fill='#4a4a4a'/></svg>
<div style='left:1027px;top:67px;width:24px;height:21px;background:#fafafa;border:1px solid #c6c6c6;border-bottom:none'></div>
<svg style='left:1031px;top:70px' width='16' height='16' viewBox='0 0 16 16'><g opacity='.35'><path d='M3 2h3v3l1 .5v9h-5.500v-7zM13 2h-3v3l-1 .5v9h5.500v-7z' fill='#555'/></g><path d='M12 9v6M9 12h6' stroke='#7ac' stroke-width='1.200'/></svg>
<div style='left:1053px;top:67px;width:34px;height:21px;background:#fafafa;border:1px solid #c6c6c6;border-bottom:none'></div>
<div style='left:1074px;top:68px;width:1px;height:20px;background:#d0d0d0;'></div>
<svg style='left:1078px;top:78px' width='6' height='6' viewBox='0 0 6 6'><path d='M6 0v6h-6z' fill='#555'/></svg>
<svg style='left:1057px;top:70px' width='16' height='16' viewBox='0 0 16 16'><path d='M1 1.500h14l-5.500 6.500v6.500h-3v-6.500z' fill='#4a4a4a'/><path d='M9.500 8a2.500 2.500 0 1 0 2-4' fill='none' stroke='#fff' stroke-width='.8'/></svg>
<div style='left:1092px;top:71px;width:1px;height:13px;background:#999;'></div>
<div style='left:1099px;top:67px;width:24px;height:21px;background:#fafafa;border:1px solid #c6c6c6;border-bottom:none'></div>
<svg style='left:1103px;top:70px' width='16' height='16' viewBox='0 0 16 16'><path d='M4 1.500h8v4h-8z' fill='#4a4a4a'/><path d='M1.500 5.500h13v6h-13z' fill='#4a4a4a'/><rect x='4.500' y='9.500' width='7' height='5' fill='#fff' stroke='#2a7fd0'/><path d='M6 12h4' stroke='#2a7fd0'/><rect x='11.500' y='7' width='2' height='1' fill='#4af'/></svg>
<div style='left:1125px;top:67px;width:34px;height:21px;background:#fafafa;border:1px solid #c6c6c6;border-bottom:none'></div>
<svg style='left:1129px;top:70px' width='16' height='16' viewBox='0 0 16 16'><circle cx='6.500' cy='9' r='5' fill='none' stroke='#4a4a4a' stroke-width='1.200'/><path d='M5 2.500h7l2 2v9h-6' fill='#fff' stroke='#4a4a4a'/><path d='M5 7h8M5 10h8M9 5v8' stroke='#4a4a4a' stroke-width='1.200'/></svg>
<svg style='left:1149px;top:78px' width='6' height='6' viewBox='0 0 6 6'><path d='M6 0v6h-6z' fill='#555'/></svg>
<div style='left:1161px;top:67px;width:34px;height:21px;background:#fafafa;border:1px solid #c6c6c6;border-bottom:none'></div>
<div style='left:1182px;top:68px;width:1px;height:20px;background:#d0d0d0;'></div>
<svg style='left:1186px;top:78px' width='6' height='6' viewBox='0 0 6 6'><path d='M6 0v6h-6z' fill='#555'/></svg>
<svg style='left:1165px;top:70px' width='16' height='16' viewBox='0 0 16 16'><rect x='1' y='4.500' width='6' height='4' fill='#f0ab00'/><rect x='3' y='6' width='2' height='1.500' fill='#fff'/><path d='M8.500 1.500h6M8.500 5h6M8.500 8.500h6M8.500 12h6M11.500 1v12M8.500 1.500v11' stroke='#4a4a4a' stroke-width='.9' stroke-dasharray='2 1'/></svg>
<div style='left:1200px;top:71px;width:1px;height:13px;background:#999;'></div>
<div style='left:1207px;top:67px;width:24px;height:21px;background:#fafafa;border:1px solid #c6c6c6;border-bottom:none'></div>
<svg style='left:1211px;top:70px' width='16' height='16' viewBox='0 0 16 16'><rect x='1.500' y='1.500' width='13' height='13' fill='#fff' stroke='#555'/><text x='8' y='13' text-anchor='middle' font-family='Liberation Serif,serif' font-style='italic' font-weight='bold' font-size='13' fill='#1a7fd6'>i</text></svg>
<div style='left:1233px;top:67px;width:53px;height:21px;background:#fafafa;border:1px solid #c6c6c6;border-bottom:none'></div>
<svg style='left:1237px;top:70px' width='16' height='16' viewBox='0 0 16 16'><path d='M1.500 1.500h6l2 2v8h-8z' fill='#fff' stroke='#4a4a4a' stroke-width='.9'/><path d='M3 4.500h4M3 6.500h4M3 8.500h4' stroke='#4a4a4a' stroke-width='.8'/><path d='M6.500 4.500h6l2 2v8.500h-8z' fill='#fff' stroke='#4a4a4a' stroke-width='.9'/><path d='M8 8.500h5M8 10.500h5M8 12.500h5' stroke='#1a7fd6' stroke-width='.9'/></svg>
<span class='t ' style='left:1256px;top:71px;letter-spacing:-0.429px;'>Copy</span>
<div style='left:890px;top:91px;width:984px;height:18px;background:#e8e8e8;'></div>
<div style='left:890px;top:109px;width:22px;height:380px;background:#e8e8e8;'></div>
<div style='left:913px;top:109px;width:16px;height:380px;background:#e9ecef;'></div>
<div style='left:929px;top:109px;width:32px;height:380px;background:#c4e9ee;'></div>
<div style='left:961px;top:109px;width:72px;height:380px;background:#c4e9ee;'></div>
<div style='left:1033px;top:109px;width:61px;height:380px;background:#c4e9ee;'></div>
<div style='left:1094px;top:109px;width:58px;height:380px;background:#e9ecef;'></div>
<div style='left:1152px;top:109px;width:70px;height:380px;background:#e9ecef;'></div>
<div style='left:1222px;top:109px;width:58px;height:380px;background:#e9ecef;'></div>
<div style='left:1280px;top:109px;width:81px;height:380px;background:#e9ecef;'></div>
<div style='left:1361px;top:109px;width:166px;height:380px;background:#e9ecef;'></div>
<div style='left:1527px;top:109px;width:61px;height:380px;background:#cde3e4;'></div>
<div style='left:1588px;top:109px;width:62px;height:380px;background:#cde3e4;'></div>
<div style='left:1650px;top:109px;width:66px;height:380px;background:#cde3e4;'></div>
<div style='left:1716px;top:109px;width:65px;height:380px;background:#cde3e4;'></div>
<div style='left:1781px;top:109px;width:64px;height:380px;background:#e9ecef;'></div>
<div style='left:1845px;top:109px;width:29px;height:380px;background:#cde3e4;'></div>
<div style='left:890px;top:108px;width:983px;height:1px;background:#d4d4d4;'></div>
<div style='left:890px;top:127px;width:983px;height:1px;background:#c9c9c9;'></div>
<div style='left:890px;top:146px;width:983px;height:1px;background:#c9c9c9;'></div>
<div style='left:890px;top:165px;width:983px;height:1px;background:#c9c9c9;'></div>
<div style='left:890px;top:184px;width:983px;height:1px;background:#c9c9c9;'></div>
<div style='left:890px;top:203px;width:983px;height:1px;background:#c9c9c9;'></div>
<div style='left:890px;top:222px;width:983px;height:1px;background:#c9c9c9;'></div>
<div style='left:890px;top:241px;width:983px;height:1px;background:#c9c9c9;'></div>
<div style='left:890px;top:260px;width:983px;height:1px;background:#c9c9c9;'></div>
<div style='left:890px;top:279px;width:983px;height:1px;background:#c9c9c9;'></div>
<div style='left:890px;top:298px;width:983px;height:1px;background:#c9c9c9;'></div>
<div style='left:890px;top:317px;width:983px;height:1px;background:#c9c9c9;'></div>
<div style='left:890px;top:336px;width:983px;height:1px;background:#c9c9c9;'></div>
<div style='left:890px;top:355px;width:983px;height:1px;background:#c9c9c9;'></div>
<div style='left:890px;top:374px;width:983px;height:1px;background:#c9c9c9;'></div>
<div style='left:890px;top:393px;width:983px;height:1px;background:#c9c9c9;'></div>
<div style='left:890px;top:412px;width:983px;height:1px;background:#c9c9c9;'></div>
<div style='left:890px;top:431px;width:983px;height:1px;background:#c9c9c9;'></div>
<div style='left:890px;top:450px;width:983px;height:1px;background:#c9c9c9;'></div>
<div style='left:890px;top:469px;width:983px;height:1px;background:#c9c9c9;'></div>
<div style='left:890px;top:488px;width:983px;height:1px;background:#c9c9c9;'></div>
<div style='left:890px;top:108px;width:22px;height:1px;background:#cfcfcf;'></div>
<div style='left:912px;top:91px;width:1px;height:398px;background:#f6f6f6;'></div>
<div style='left:928px;top:109px;width:1px;height:380px;background:#dfe9ec;'></div>
<div style='left:928px;top:91px;width:1px;height:17px;background:#f2f2f2;'></div>
<span class='t ' style='left:916px;top:93px;letter-spacing:-0.396px;'>ID</span>
<div style='left:960px;top:109px;width:1px;height:380px;background:#c9c9c9;'></div>
<div style='left:960px;top:91px;width:1px;height:17px;background:#dcdcdc;'></div>
<span class='t ' style='left:932px;top:93px;letter-spacing:0.509px;'>Item</span>
<div style='left:1032px;top:109px;width:1px;height:380px;background:#c9c9c9;'></div>
<div style='left:1032px;top:91px;width:1px;height:17px;background:#dcdcdc;'></div>
<span class='t ' style='left:963px;top:93px;letter-spacing:-0.337px;'>Material</span>
<div style='left:1093px;top:109px;width:1px;height:380px;background:#c9c9c9;'></div>
<div style='left:1093px;top:91px;width:1px;height:17px;background:#dcdcdc;'></div>
<span class='t ' style='left:1035px;top:93px;letter-spacing:0.2px;'>Order Qty</span>
<div style='left:1151px;top:109px;width:1px;height:380px;background:#c9c9c9;'></div>
<div style='left:1151px;top:91px;width:1px;height:17px;background:#dcdcdc;'></div>
<span class='t ' style='left:1096px;top:93px;letter-spacing:-0.175px;'>Specificat</span>
<div style='left:1221px;top:109px;width:1px;height:380px;background:#c9c9c9;'></div>
<div style='left:1221px;top:91px;width:1px;height:17px;background:#dcdcdc;'></div>
<span class='t ' style='left:1155px;top:93px;letter-spacing:0.261px;'>Stat Dem V</span>
<div style='left:1279px;top:109px;width:1px;height:380px;background:#c9c9c9;'></div>
<div style='left:1279px;top:91px;width:1px;height:17px;background:#dcdcdc;'></div>
<span class='t ' style='left:1224px;top:93px;letter-spacing:0.251px;'>Stat Prod</span>
<div style='left:1360px;top:109px;width:1px;height:380px;background:#c9c9c9;'></div>
<div style='left:1360px;top:91px;width:1px;height:17px;background:#dcdcdc;'></div>
<span class='t ' style='left:1282px;top:93px;letter-spacing:0.231px;'>Product Value</span>
<div style='left:1526px;top:109px;width:1px;height:380px;background:#c9c9c9;'></div>
<div style='left:1526px;top:91px;width:1px;height:17px;background:#dcdcdc;'></div>
<span class='t ' style='left:1363px;top:93px;letter-spacing:-0.105px;'>Quality Value</span>
<div style='left:1587px;top:109px;width:1px;height:380px;background:#c9c9c9;'></div>
<div style='left:1587px;top:91px;width:1px;height:17px;background:#dcdcdc;'></div>
<span class='t ' style='left:1529px;top:93px;letter-spacing:-0.074px;'>Quality Va</span>
<div style='left:1649px;top:109px;width:1px;height:380px;background:#c9c9c9;'></div>
<div style='left:1649px;top:91px;width:1px;height:17px;background:#dcdcdc;'></div>
<span class='t ' style='left:1590px;top:93px;letter-spacing:-0.085px;'>Thick Valu</span>
<div style='left:1715px;top:109px;width:1px;height:380px;background:#c9c9c9;'></div>
<div style='left:1715px;top:91px;width:1px;height:17px;background:#dcdcdc;'></div>
<span class='t ' style='left:1652px;top:93px;letter-spacing:0.147px;'>Width Valu</span>
<div style='left:1780px;top:109px;width:1px;height:380px;background:#c9c9c9;'></div>
<div style='left:1780px;top:91px;width:1px;height:17px;background:#dcdcdc;'></div>
<span class='t ' style='left:1718px;top:93px;letter-spacing:0.254px;'>Length Val</span>
<div style='left:1844px;top:109px;width:1px;height:380px;background:#c9c9c9;'></div>
<div style='left:1844px;top:91px;width:1px;height:17px;background:#dcdcdc;'></div>
<span class='t ' style='left:1783px;top:93px;letter-spacing:-0.015px;'>Density Va</span>
<div style='left:1873px;top:109px;width:1px;height:380px;background:#c9c9c9;'></div>
<div style='left:1873px;top:91px;width:1px;height:17px;background:#dcdcdc;'></div>
<span class='t ' style='left:1847px;top:93px;letter-spacing:-0.362px;'>Del.</span>
<svg style='left:893px;top:92px' width='16' height='16' viewBox='0 0 16 16'><path d='M9.500 3v-1.500h-8v12h5' fill='#fff' stroke='#555'/><path d='M3 4.500h5M3 7.500h4M3 10.500h3' stroke='#008a3b' stroke-width='1.600'/><path d='M8.500 6.500l4 6-2.500-.6-1.500 2z' fill='#555'/></svg>
<svg style='left:915px;top:111px' width='13' height='16' viewBox='0 0 13 16'><path d='M1.5 .5h5.5l4.5 4.5v9.5h-10z' fill='#eceef2' stroke='#505050'/><path d='M7 .5v4.5h4.5z' fill='#666' stroke='#555' stroke-width='.5'/></svg>
<svg style='left:915px;top:130px' width='13' height='16' viewBox='0 0 13 16'><path d='M1.5 .5h5.5l4.5 4.5v9.5h-10z' fill='#eceef2' stroke='#505050'/><path d='M7 .5v4.5h4.5z' fill='#666' stroke='#555' stroke-width='.5'/></svg>
<svg style='left:915px;top:149px' width='13' height='16' viewBox='0 0 13 16'><path d='M1.5 .5h5.5l4.5 4.5v9.5h-10z' fill='#eceef2' stroke='#505050'/><path d='M7 .5v4.5h4.5z' fill='#666' stroke='#555' stroke-width='.5'/></svg>
<svg style='left:915px;top:168px' width='13' height='16' viewBox='0 0 13 16'><path d='M1.5 .5h5.5l4.5 4.5v9.5h-10z' fill='#eceef2' stroke='#505050'/><path d='M7 .5v4.5h4.5z' fill='#666' stroke='#555' stroke-width='.5'/></svg>
<svg style='left:915px;top:187px' width='13' height='16' viewBox='0 0 13 16'><path d='M1.5 .5h5.5l4.5 4.5v9.5h-10z' fill='#eceef2' stroke='#505050'/><path d='M7 .5v4.5h4.5z' fill='#666' stroke='#555' stroke-width='.5'/></svg>
<svg style='left:915px;top:206px' width='13' height='16' viewBox='0 0 13 16'><path d='M1.5 .5h5.5l4.5 4.5v9.5h-10z' fill='#eceef2' stroke='#505050'/><path d='M7 .5v4.5h4.5z' fill='#666' stroke='#555' stroke-width='.5'/></svg>
<svg style='left:915px;top:225px' width='13' height='16' viewBox='0 0 13 16'><path d='M1.5 .5h5.5l4.5 4.5v9.5h-10z' fill='#eceef2' stroke='#505050'/><path d='M7 .5v4.5h4.5z' fill='#666' stroke='#555' stroke-width='.5'/></svg>
<svg style='left:915px;top:244px' width='13' height='16' viewBox='0 0 13 16'><path d='M1.5 .5h5.5l4.5 4.5v9.5h-10z' fill='#eceef2' stroke='#505050'/><path d='M7 .5v4.5h4.5z' fill='#666' stroke='#555' stroke-width='.5'/></svg>
<svg style='left:915px;top:263px' width='13' height='16' viewBox='0 0 13 16'><path d='M1.5 .5h5.5l4.5 4.5v9.5h-10z' fill='#eceef2' stroke='#505050'/><path d='M7 .5v4.5h4.5z' fill='#666' stroke='#555' stroke-width='.5'/></svg>
<svg style='left:915px;top:282px' width='13' height='16' viewBox='0 0 13 16'><path d='M1.5 .5h5.5l4.5 4.5v9.5h-10z' fill='#eceef2' stroke='#505050'/><path d='M7 .5v4.5h4.5z' fill='#666' stroke='#555' stroke-width='.5'/></svg>
<svg style='left:915px;top:301px' width='13' height='16' viewBox='0 0 13 16'><path d='M1.5 .5h5.5l4.5 4.5v9.5h-10z' fill='#eceef2' stroke='#505050'/><path d='M7 .5v4.5h4.5z' fill='#666' stroke='#555' stroke-width='.5'/></svg>
<svg style='left:915px;top:320px' width='13' height='16' viewBox='0 0 13 16'><path d='M1.5 .5h5.5l4.5 4.5v9.5h-10z' fill='#eceef2' stroke='#505050'/><path d='M7 .5v4.5h4.5z' fill='#666' stroke='#555' stroke-width='.5'/></svg>
<svg style='left:915px;top:339px' width='13' height='16' viewBox='0 0 13 16'><path d='M1.5 .5h5.5l4.5 4.5v9.5h-10z' fill='#eceef2' stroke='#505050'/><path d='M7 .5v4.5h4.5z' fill='#666' stroke='#555' stroke-width='.5'/></svg>
<svg style='left:915px;top:358px' width='13' height='16' viewBox='0 0 13 16'><path d='M1.5 .5h5.5l4.5 4.5v9.5h-10z' fill='#eceef2' stroke='#505050'/><path d='M7 .5v4.5h4.5z' fill='#666' stroke='#555' stroke-width='.5'/></svg>
<svg style='left:915px;top:377px' width='13' height='16' viewBox='0 0 13 16'><path d='M1.5 .5h5.5l4.5 4.5v9.5h-10z' fill='#eceef2' stroke='#505050'/><path d='M7 .5v4.5h4.5z' fill='#666' stroke='#555' stroke-width='.5'/></svg>
<svg style='left:915px;top:396px' width='13' height='16' viewBox='0 0 13 16'><path d='M1.5 .5h5.5l4.5 4.5v9.5h-10z' fill='#eceef2' stroke='#505050'/><path d='M7 .5v4.5h4.5z' fill='#666' stroke='#555' stroke-width='.5'/></svg>
<svg style='left:915px;top:415px' width='13' height='16' viewBox='0 0 13 16'><path d='M1.5 .5h5.5l4.5 4.5v9.5h-10z' fill='#eceef2' stroke='#505050'/><path d='M7 .5v4.5h4.5z' fill='#666' stroke='#555' stroke-width='.5'/></svg>
<svg style='left:915px;top:434px' width='13' height='16' viewBox='0 0 13 16'><path d='M1.5 .5h5.5l4.5 4.5v9.5h-10z' fill='#eceef2' stroke='#505050'/><path d='M7 .5v4.5h4.5z' fill='#666' stroke='#555' stroke-width='.5'/></svg>
<svg style='left:915px;top:453px' width='13' height='16' viewBox='0 0 13 16'><path d='M1.5 .5h5.5l4.5 4.5v9.5h-10z' fill='#eceef2' stroke='#505050'/><path d='M7 .5v4.5h4.5z' fill='#666' stroke='#555' stroke-width='.5'/></svg>
<svg style='left:915px;top:472px' width='13' height='16' viewBox='0 0 13 16'><path d='M1.5 .5h5.5l4.5 4.5v9.5h-10z' fill='#eceef2' stroke='#505050'/><path d='M7 .5v4.5h4.5z' fill='#666' stroke='#555' stroke-width='.5'/></svg>
<span class='t r' style='left:929px;top:112px;width:27px;'>10</span>
<span class='t u' style='left:963px;top:110px;letter-spacing:0.24px;text-underline-offset:1px'>SLAB_01</span>
<span class='t r' style='left:1033px;top:112px;width:56px;'>123,000</span>
<div style='left:1181px;top:111px;width:15px;height:15px;background:#008a3b;'></div>
<div style='left:1245px;top:111px;width:15px;height:15px;background:#008a3b;'></div>
<span class='t ' style='left:1282px;top:110px;letter-spacing:0.536px;'>HOTSTRIP</span>
<span class='t u' style='left:1363px;top:110px;letter-spacing:0.516px;text-underline-offset:1px'>DIN - QUALITY - 2 TESTS</span>
<span class='t r' style='left:1588px;top:112px;width:57px;'>4</span>
<span class='t r' style='left:1650px;top:112px;width:61px;'>800</span>
<span class='t ' style='left:1847px;top:110px;'>A</span>
<span class='t r' style='left:929px;top:131px;width:27px;'>20</span>
<span class='t u' style='left:963px;top:129px;letter-spacing:0.24px;text-underline-offset:1px'>SLAB_01</span>
<span class='t r' style='left:1033px;top:131px;width:56px;'>55,000</span>
<div style='left:1181px;top:130px;width:15px;height:15px;background:#008a3b;'></div>
<div style='left:1245px;top:130px;width:15px;height:15px;background:#008a3b;'></div>
<span class='t ' style='left:1282px;top:129px;letter-spacing:0.536px;'>HOTSTRIP</span>
<span class='t u' style='left:1363px;top:129px;letter-spacing:0.516px;text-underline-offset:1px'>DIN - QUALITY - 2 TESTS</span>
<span class='t r' style='left:1588px;top:131px;width:57px;'>4</span>
<span class='t r' style='left:1650px;top:131px;width:61px;'>77</span>
<span class='t ' style='left:1847px;top:129px;'>A</span>
<span class='t r' style='left:929px;top:150px;width:27px;'>30</span>
<span class='t u' style='left:963px;top:148px;letter-spacing:0.24px;text-underline-offset:1px'>SLAB_01</span>
<span class='t r' style='left:1033px;top:150px;width:56px;'>123,000</span>
<div style='left:1181px;top:149px;width:15px;height:15px;background:#008a3b;'></div>
<div style='left:1245px;top:149px;width:15px;height:15px;background:#008a3b;'></div>
<span class='t ' style='left:1282px;top:148px;letter-spacing:0.536px;'>HOTSTRIP</span>
<span class='t u' style='left:1363px;top:148px;letter-spacing:0.516px;text-underline-offset:1px'>DIN - QUALITY - 2 TESTS</span>
<span class='t r' style='left:1588px;top:150px;width:57px;'>4</span>
<span class='t r' style='left:1650px;top:150px;width:61px;'>800</span>
<span class='t ' style='left:1847px;top:148px;'>A</span>
<span class='t r' style='left:929px;top:169px;width:27px;'>40</span>
<span class='t u' style='left:963px;top:167px;letter-spacing:0.24px;text-underline-offset:1px'>SLAB_01</span>
<span class='t r' style='left:1033px;top:169px;width:56px;'>55,000</span>
<div style='left:1181px;top:168px;width:15px;height:15px;background:#008a3b;'></div>
<div style='left:1245px;top:168px;width:15px;height:15px;background:#008a3b;'></div>
<span class='t ' style='left:1282px;top:167px;letter-spacing:0.536px;'>HOTSTRIP</span>
<span class='t u' style='left:1363px;top:167px;letter-spacing:0.516px;text-underline-offset:1px'>DIN - QUALITY - 2 TESTS</span>
<span class='t r' style='left:1588px;top:169px;width:57px;'>4</span>
<span class='t r' style='left:1650px;top:169px;width:61px;'>77</span>
<span class='t ' style='left:1847px;top:167px;'>A</span>
<span class='t r' style='left:929px;top:188px;width:27px;'>50</span>
<span class='t u' style='left:963px;top:186px;letter-spacing:0.24px;text-underline-offset:1px'>SLAB_01</span>
<span class='t r' style='left:1033px;top:188px;width:56px;'>55,000</span>
<div style='left:1181px;top:187px;width:15px;height:15px;background:#008a3b;'></div>
<div style='left:1245px;top:187px;width:15px;height:15px;background:#008a3b;'></div>
<span class='t ' style='left:1282px;top:186px;letter-spacing:0.536px;'>HOTSTRIP</span>
<span class='t u' style='left:1363px;top:186px;letter-spacing:0.516px;text-underline-offset:1px'>DIN - QUALITY - 2 TESTS</span>
<span class='t r' style='left:1588px;top:188px;width:57px;'>4</span>
<span class='t r' style='left:1650px;top:188px;width:61px;'>800</span>
<span class='t ' style='left:1847px;top:186px;'>A</span>
<span class='t r' style='left:929px;top:207px;width:27px;'>60</span>
<span class='t u' style='left:963px;top:205px;letter-spacing:0.24px;text-underline-offset:1px'>SLAB_01</span>
<span class='t r' style='left:1033px;top:207px;width:56px;'>555,000</span>
<div style='left:1181px;top:206px;width:15px;height:15px;background:#008a3b;'></div>
<div style='left:1245px;top:206px;width:15px;height:15px;background:#008a3b;'></div>
<span class='t ' style='left:1282px;top:205px;letter-spacing:0.536px;'>HOTSTRIP</span>
<span class='t u' style='left:1363px;top:205px;letter-spacing:0.516px;text-underline-offset:1px'>DIN - QUALITY - 2 TESTS</span>
<span class='t r' style='left:1588px;top:207px;width:57px;'>4</span>
<span class='t r' style='left:1650px;top:207px;width:61px;'>800</span>
<span class='t ' style='left:1847px;top:205px;'>A</span>
<span class='t r' style='left:929px;top:226px;width:27px;'>70</span>
<span class='t u' style='left:963px;top:224px;letter-spacing:0.24px;text-underline-offset:1px'>SLAB_01</span>
<span class='t r' style='left:1033px;top:226px;width:56px;'>555,000</span>
<div style='left:1181px;top:225px;width:15px;height:15px;background:#008a3b;'></div>
<div style='left:1245px;top:225px;width:15px;height:15px;background:#008a3b;'></div>
<span class='t ' style='left:1282px;top:224px;letter-spacing:0.536px;'>HOTSTRIP</span>
<span class='t u' style='left:1363px;top:224px;letter-spacing:0.516px;text-underline-offset:1px'>DIN - QUALITY - 2 TESTS</span>
<span class='t r' style='left:1588px;top:226px;width:57px;'>4</span>
<span class='t r' style='left:1650px;top:226px;width:61px;'>800</span>
<span class='t ' style='left:1847px;top:224px;'>A</span>
<span class='t r' style='left:929px;top:245px;width:27px;'>80</span>
<span class='t u' style='left:963px;top:243px;letter-spacing:0.24px;text-underline-offset:1px'>SLAB_01</span>
<span class='t r' style='left:1033px;top:245px;width:56px;'>555,000</span>
<div style='left:1181px;top:244px;width:15px;height:15px;background:#008a3b;'></div>
<div style='left:1245px;top:244px;width:15px;height:15px;background:#008a3b;'></div>
<span class='t ' style='left:1282px;top:243px;letter-spacing:0.536px;'>HOTSTRIP</span>
<span class='t u' style='left:1363px;top:243px;letter-spacing:0.516px;text-underline-offset:1px'>DIN - QUALITY - 2 TESTS</span>
<span class='t r' style='left:1588px;top:245px;width:57px;'>4</span>
<span class='t r' style='left:1650px;top:245px;width:61px;'>800</span>
<span class='t ' style='left:1847px;top:243px;'>A</span>
<div style='left:890px;top:489px;width:983px;height:366px;background:#fafafa;'></div>
<div style='left:890px;top:854px;width:983px;height:1px;background:#bdbdbd;'></div>
<div style='left:1873px;top:90px;width:1px;height:787px;background:#bdbdbd;'></div>
<div style='left:890px;top:876px;width:984px;height:1px;background:#bdbdbd;'></div>
<div style='left:890px;top:855px;width:983px;height:21px;background:#fbfbfb;'></div>
<div style='left:913px;top:857px;width:960px;height:17px;background:#f2f2f2;'></div>
<div style='left:1834px;top:857px;width:2px;height:17px;background:#f8f8f8;'></div>
<div style='left:1853px;top:857px;width:1px;height:17px;background:#f8f8f8;'></div>
<svg style='left:918px;top:861px' width='7' height='10' viewBox='0 0 7 10'><path d='M5 2l-3 3 3 3' fill='none' stroke='#3f4d66' stroke-width='1.3'/></svg>
<svg style='left:936px;top:861px' width='7' height='10' viewBox='0 0 7 10'><path d='M2 2l3 3-3 3' fill='none' stroke='#3f4d66' stroke-width='1.3'/></svg>
<svg style='left:1842px;top:861px' width='7' height='10' viewBox='0 0 7 10'><path d='M5 2l-3 3 3 3' fill='none' stroke='#3f4d66' stroke-width='1.3'/></svg>
<svg style='left:1860px;top:861px' width='7' height='10' viewBox='0 0 7 10'><path d='M2 2l3 3-3 3' fill='none' stroke='#3f4d66' stroke-width='1.3'/></svg>
<div style='left:951px;top:861px;width:715px;height:10px;background:#b7c0cc;'></div>
<div style='left:1304px;top:864px;width:2px;height:4px;background:#fff;'></div>
<div style='left:1307px;top:864px;width:2px;height:4px;background:#fff;'></div>
<div style='left:1310px;top:864px;width:2px;height:4px;background:#fff;'></div>
</body></html>
